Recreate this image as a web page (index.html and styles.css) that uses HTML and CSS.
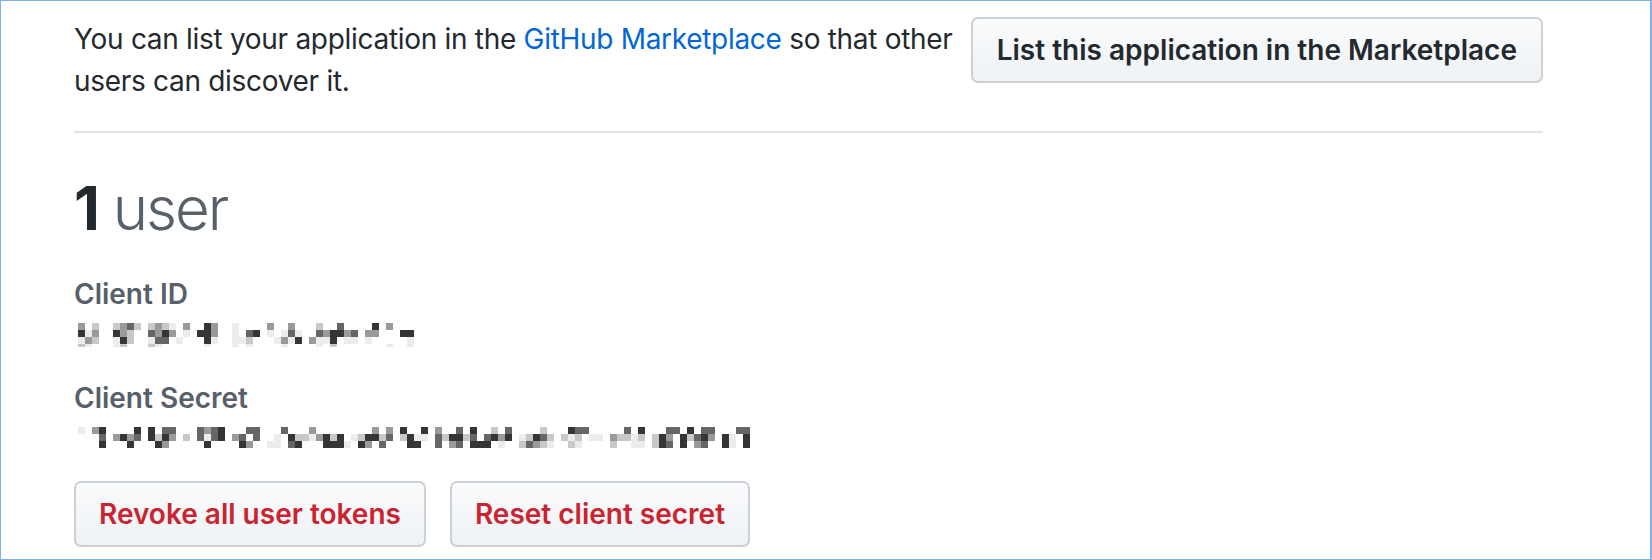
FILE: index.html
```html
<!DOCTYPE html>
<html lang="en">
<head>
<meta charset="utf-8">
<title>OAuth application</title>
<link rel="stylesheet" href="styles.css">
</head>
<body>
<div class="frame">
  <div class="content">
    <div class="listing">
      <p class="listing-text">You can list your application in the <a href="#" class="link">GitHub Marketplace</a> so that other users can discover it.</p>
      <a href="#" class="btn">List this application in the Marketplace</a>
    </div>

    <h2 class="users"><strong class="users-count">1</strong> user</h2>

    <div class="field">
      <div class="field-label">Client ID</div>
      <div class="field-value">
        <svg class="mosaic" width="336" height="24" viewBox="0 0 336 24" shape-rendering="crispEdges" aria-label="Client ID (redacted)">
          <path fill="#ececec" d="M91 0h7v7h-7zM154 0h7v7h-7zM7 7h7v7h-7zM105 7h7v7h-7zM154 7h7v7h-7zM189 7h7v7h-7zM203 7h7v7h-7zM217 7h7v7h-7zM0 14h7v7h-7zM35 14h7v7h-7zM70 14h7v7h-7zM98 14h7v7h-7zM133 14h7v7h-7zM154 14h14v7h-14zM196 14h7v7h-7zM210 14h7v7h-7zM238 14h14v7h-14zM266 14h14v7h-14zM287 14h7v7h-7zM329 14h7v7h-7zM7 21h7v3h-7zM35 21h7v3h-7zM77 21h7v3h-7zM126 21h7v3h-7zM154 21h7v3h-7zM168 21h7v3h-7zM203 21h7v3h-7zM238 21h7v3h-7zM308 21h7v3h-7zM329 21h7v3h-7z"/>
          <path fill="#c8c8c8" d="M14 0h7v7h-7zM35 0h7v7h-7zM56 0h7v7h-7zM70 0h7v7h-7zM84 0h7v7h-7zM238 0h7v7h-7zM49 7h7v7h-7zM14 14h7v7h-7zM49 14h7v7h-7zM168 14h7v7h-7zM0 21h7v3h-7zM42 21h7v3h-7zM70 21h7v3h-7zM252 21h7v3h-7z"/>
          <path fill="#9a9a9a" d="M0 0h7v7h-7zM42 0h7v7h-7zM77 0h7v7h-7zM105 0h7v7h-7zM133 0h7v7h-7zM189 0h7v7h-7zM210 0h7v7h-7zM308 0h7v7h-7zM14 7h7v7h-7zM42 7h7v7h-7zM77 7h7v7h-7zM91 7h7v7h-7zM133 7h7v7h-7zM245 7h7v7h-7zM266 7h7v7h-7zM287 7h14v7h-14zM7 14h7v7h-7zM203 14h7v7h-7zM231 14h7v7h-7z"/>
          <path fill="#666666" d="M49 0h7v7h-7zM259 0h7v7h-7zM70 7h7v7h-7zM168 7h7v7h-7zM210 7h7v7h-7zM238 7h7v7h-7zM273 7h7v7h-7zM77 14h14v7h-14z"/>
          <path fill="#353535" d="M126 0h7v7h-7zM294 0h7v7h-7zM0 7h7v7h-7zM35 7h7v7h-7zM84 7h7v7h-7zM119 7h14v7h-14zM175 7h7v7h-7zM252 7h14v7h-14zM322 7h14v7h-14zM42 14h7v7h-7zM126 14h7v7h-7zM217 14h7v7h-7zM252 14h7v7h-7z"/>
        </svg>
      </div>
    </div>

    <div class="field field-secret">
      <div class="field-label">Client Secret</div>
      <div class="field-value">
        <svg class="mosaic" width="672" height="21" viewBox="0 0 672 21" shape-rendering="crispEdges" aria-label="Client secret (redacted)">
          <path fill="#ececec" d="M0 0h7v7h-7zM126 7h7v7h-7zM196 7h7v7h-7zM231 7h7v7h-7zM273 7h7v7h-7zM336 7h14v7h-14zM441 7h7v7h-7zM490 7h7v7h-7zM511 7h14v7h-14zM553 7h7v7h-7zM651 7h7v7h-7zM189 14h14v7h-14zM266 14h7v7h-7zM420 14h7v7h-7zM469 14h7v7h-7zM497 14h7v7h-7zM553 14h14v7h-14zM651 14h7v7h-7z"/>
          <path fill="#c8c8c8" d="M413 0h7v7h-7zM462 0h7v7h-7zM77 7h7v7h-7zM105 7h7v7h-7zM217 7h14v7h-14zM252 7h7v7h-7zM280 7h7v7h-7zM301 7h7v7h-7zM322 7h7v7h-7zM364 7h7v7h-7zM385 7h7v7h-7zM448 7h7v7h-7zM469 7h7v7h-7zM483 7h7v7h-7zM497 7h7v7h-7zM539 7h14v7h-14zM560 7h7v7h-7zM574 7h7v7h-7zM609 7h7v7h-7zM441 14h7v7h-7zM462 14h7v7h-7zM490 14h7v7h-7zM532 14h7v7h-7zM574 14h7v7h-7z"/>
          <path fill="#9a9a9a" d="M14 0h7v7h-7zM126 0h7v7h-7zM231 0h7v7h-7zM294 0h7v7h-7zM308 0h7v7h-7zM357 0h7v7h-7zM35 7h7v7h-7zM49 7h7v7h-7zM91 7h7v7h-7zM154 7h7v7h-7zM238 7h7v7h-7zM420 7h7v7h-7zM532 7h7v7h-7zM588 7h7v7h-7zM630 7h7v7h-7zM84 14h7v7h-7zM168 14h7v7h-7zM287 14h7v7h-7zM371 14h7v7h-7zM455 14h7v7h-7zM616 14h7v7h-7z"/>
          <path fill="#666666" d="M84 0h14v7h-14zM119 0h7v7h-7zM133 0h7v7h-7zM168 0h14v7h-14zM203 0h7v7h-7zM378 0h7v7h-7zM427 0h7v7h-7zM497 0h14v7h-14zM546 0h7v7h-7zM588 0h14v7h-14zM623 0h14v7h-14zM658 0h14v7h-14zM21 7h7v7h-7zM56 7h7v7h-7zM119 7h7v7h-7zM133 7h7v7h-7zM161 7h7v7h-7zM175 7h7v7h-7zM308 7h7v7h-7zM357 7h7v7h-7zM392 7h7v7h-7zM406 7h7v7h-7zM462 7h7v7h-7zM616 7h7v7h-7zM210 14h7v7h-7zM301 14h7v7h-7zM357 14h7v7h-7zM378 14h7v7h-7zM448 14h7v7h-7zM588 14h7v7h-7zM623 14h7v7h-7z"/>
          <path fill="#353535" d="M21 0h7v7h-7zM56 0h7v7h-7zM70 0h7v7h-7zM140 0h7v7h-7zM322 0h7v7h-7zM343 0h7v7h-7zM392 0h7v7h-7zM490 0h7v7h-7zM560 0h7v7h-7zM609 0h7v7h-7zM42 7h7v7h-7zM70 7h7v7h-7zM84 7h7v7h-7zM140 7h7v7h-7zM210 7h7v7h-7zM245 7h7v7h-7zM259 7h7v7h-7zM287 7h14v7h-14zM329 7h7v7h-7zM371 7h14v7h-14zM413 7h7v7h-7zM427 7h7v7h-7zM455 7h7v7h-7zM581 7h7v7h-7zM602 7h7v7h-7zM623 7h7v7h-7zM644 7h7v7h-7zM665 7h7v7h-7zM21 14h7v7h-7zM49 14h7v7h-7zM77 14h7v7h-7zM126 14h7v7h-7zM161 14h7v7h-7zM217 14h7v7h-7zM245 14h21v7h-21zM280 14h7v7h-7zM329 14h14v7h-14zM392 14h21v7h-21zM581 14h7v7h-7zM602 14h7v7h-7zM644 14h7v7h-7zM665 14h7v7h-7z"/>
        </svg>
      </div>
    </div>

    <div class="actions">
      <a href="#" class="btn btn-danger">Revoke all user tokens</a>
      <a href="#" class="btn btn-danger">Reset client secret</a>
    </div>
  </div>
</div>
</body>
</html>
```

FILE: styles.css
```css
* {
  box-sizing: border-box;
}

html, body {
  margin: 0;
  padding: 0;
  background: #ffffff;
}

body {
  font-family: Inter, "Liberation Sans", Arial, sans-serif;
  font-size: 28px;
  line-height: 42px;
  letter-spacing: -0.3px;
  color: #24292e;
}

.frame {
  width: 1652px;
  height: 560px;
  border: 1px solid #7fb0f2;
  border-right-width: 2px;
  overflow: hidden;
  padding: 16px 0 0 73px;
}

.content {
  width: 1469px;
}

.listing {
  display: flex;
  align-items: flex-start;
  gap: 10px;
  padding-bottom: 29px;
  border-bottom: 2px solid #e1e4e8;
}

.listing-text {
  flex: 1;
  margin: 1px 0 0;
}

.link {
  color: #0366d6;
  text-decoration: none;
}

.btn {
  display: inline-block;
  padding: 10px 24px;
  font-size: 28px;
  font-weight: 600;
  line-height: 42px;
  letter-spacing: 0;
  color: #24292e;
  text-decoration: none;
  white-space: nowrap;
  background-image: linear-gradient(-180deg, #fafbfc 0%, #eff3f6 90%);
  border: 2px solid #cdd0d4;
  border-radius: 7px;
}

.btn-danger {
  padding: 10px 23px;
  color: #cb2431;
}

.users {
  margin: 38px 0 0;
  font-size: 60px;
  line-height: 75px;
  font-weight: 300;
  color: #586069;
  letter-spacing: -2px;
}

.users-count {
  font-weight: 700;
  color: #24292e;
}

.field {
  margin-top: 27px;
}

.field-secret {
  margin-top: 20px;
}

.field-label {
  font-weight: 600;
  color: #586069;
  letter-spacing: 0;
}

.field-value {
  height: 42px;
  padding: 8px 0 0 4px;
}

.mosaic {
  display: block;
  filter: blur(0.4px);
}

.actions {
  display: flex;
  gap: 24px;
  margin-top: 20px;
}
```
